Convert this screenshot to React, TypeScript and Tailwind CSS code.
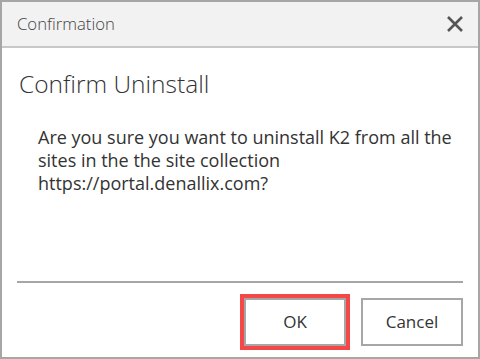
export default function App() {
  return (
    <div
      className="flex h-[359px] w-[480px] flex-col border-2 border-[#a6a6a6] bg-white text-[#333]"
      style={{ fontFamily: '"Open Sans", "Noto Sans", sans-serif' }}
    >
      {/* title bar */}
      <div className="flex h-[46px] shrink-0 items-center justify-between border-b-2 border-[#c8c8c8] bg-[#f2f2f2] pl-[15px] pr-[14px]">
        <span className="text-[16.7px] font-light text-[#444]">Confirmation</span>
        <svg width="18" height="18" viewBox="0 0 18 18" className="text-[#555]">
          <path d="M2 2 L16 16 M16 2 L2 16" stroke="currentColor" strokeWidth="2.6" />
        </svg>
      </div>

      {/* body */}
      <div className="flex flex-1 flex-col px-[15px]">
        <h1 className="mt-[20px] pl-[2px] text-[24.5px] font-light leading-[32px] text-[#333]">
          Confirm Uninstall
        </h1>
        <p className="mt-[26px] whitespace-nowrap pl-[21px] text-[18px] leading-[23px] text-[#333]">
          Are you sure you want to uninstall K2 from all the
          <br />
          sites in the the site collection
          <br />
          https://portal.denallix.com?
        </p>
        <div className="flex-1" />
        <div className="border-t-2 border-[#a6a6a6]" />
        <div className="flex justify-end gap-[15px] pb-[11px] pt-[15px]">
          <button className="h-[48px] w-[102px] border-2 border-[#a6a6a6] bg-white text-[17px] text-[#333] ring-4 ring-[#f44848]">
            OK
          </button>
          <button className="h-[48px] w-[102px] border-2 border-[#a6a6a6] bg-white text-[17px] text-[#333]">
            Cancel
          </button>
        </div>
      </div>
    </div>
  );
}
